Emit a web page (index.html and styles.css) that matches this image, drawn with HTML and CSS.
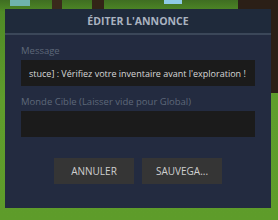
FILE: index.html
```html
<!DOCTYPE html>
<html lang="fr">
<head>
    <meta charset="UTF-8">
    <meta name="viewport" content="width=device-width, initial-scale=1.0">
    <title>Éditer l'annonce</title>
    <link rel="stylesheet" href="styles.css">
</head>
<body>
    <div class="scene">
        <div class="modal">
            <div class="modal-head">ÉDITER L'ANNONCE</div>
            <div class="modal-body">
                <div class="field">
                    <div class="label">Message</div>
                    <div class="input"><span>stuce] : Vérifiez votre inventaire avant l'exploration !</span></div>
                </div>
                <div class="field">
                    <div class="label">Monde Cible (Laisser vide pour Global)</div>
                    <div class="input"></div>
                </div>
                <div class="actions">
                    <button class="btn">ANNULER</button>
                    <button class="btn">SAUVEGA...</button>
                </div>
            </div>
        </div>
    </div>
</body>
</html>
```

FILE: styles.css
```css
* { box-sizing: border-box; }
html, body { margin: 0; padding: 0; }
body { font-family: "Open Sans", Lato, sans-serif; }

.scene {
    width: 278px; height: 220px; overflow: hidden;
    padding: 9px 0 0 5px;
    background:
        linear-gradient(90deg, transparent 238px, #2b1f17 238px) top / 100% 93px no-repeat,
        linear-gradient(90deg, transparent 10px, #6fb3ad 10px, #6fb3ad 30px, transparent 30px) top / 100% 6px no-repeat,
        linear-gradient(90deg, transparent 164px, #8fcbe6 164px, #8fcbe6 182px, transparent 182px) top / 100% 4px no-repeat,
        linear-gradient(90deg, transparent 52px, #3a2a1c 52px, #3a2a1c 62px, transparent 62px, transparent 92px, #332417 92px, #332417 104px, transparent 104px) top / 100% 9px no-repeat,
        linear-gradient(180deg, #3f6e22 0px, #4f8a26 12px, #5f9d2c 100px, #5e9c2a 220px);
}

.modal {
    width: 266px; height: 199px;
    background-color: #232b40;
}
.modal-head {
    height: 26px;
    background-color: #1f2a3b;
    border-bottom: 2px solid #3b4759;
    color: #aab3c0;
    font-weight: 700; font-size: 10.5px;
    text-align: center; line-height: 24px;
}
.modal-body { padding: 11px 16px 0 16px; }

.field { margin-bottom: 11px; }
.label {
    font-size: 9.5px; line-height: 10px;
    color: #5e6879;
    margin-bottom: 4px;
}
.input {
    height: 26px;
    background-color: #1b1b1b;
    display: flex; align-items: center;
    overflow: hidden; white-space: nowrap;
    padding: 0 8px;
    color: #d8d8d8; font-size: 9px;
}

.actions {
    display: flex; justify-content: center; gap: 8px;
    margin-top: 21px;
}
.btn {
    width: 80px; height: 26px;
    border: none; padding: 0;
    background-color: #353535;
    color: #cfcfcf;
    font-family: "Open Sans", Lato, sans-serif; font-size: 10px;
}
```
